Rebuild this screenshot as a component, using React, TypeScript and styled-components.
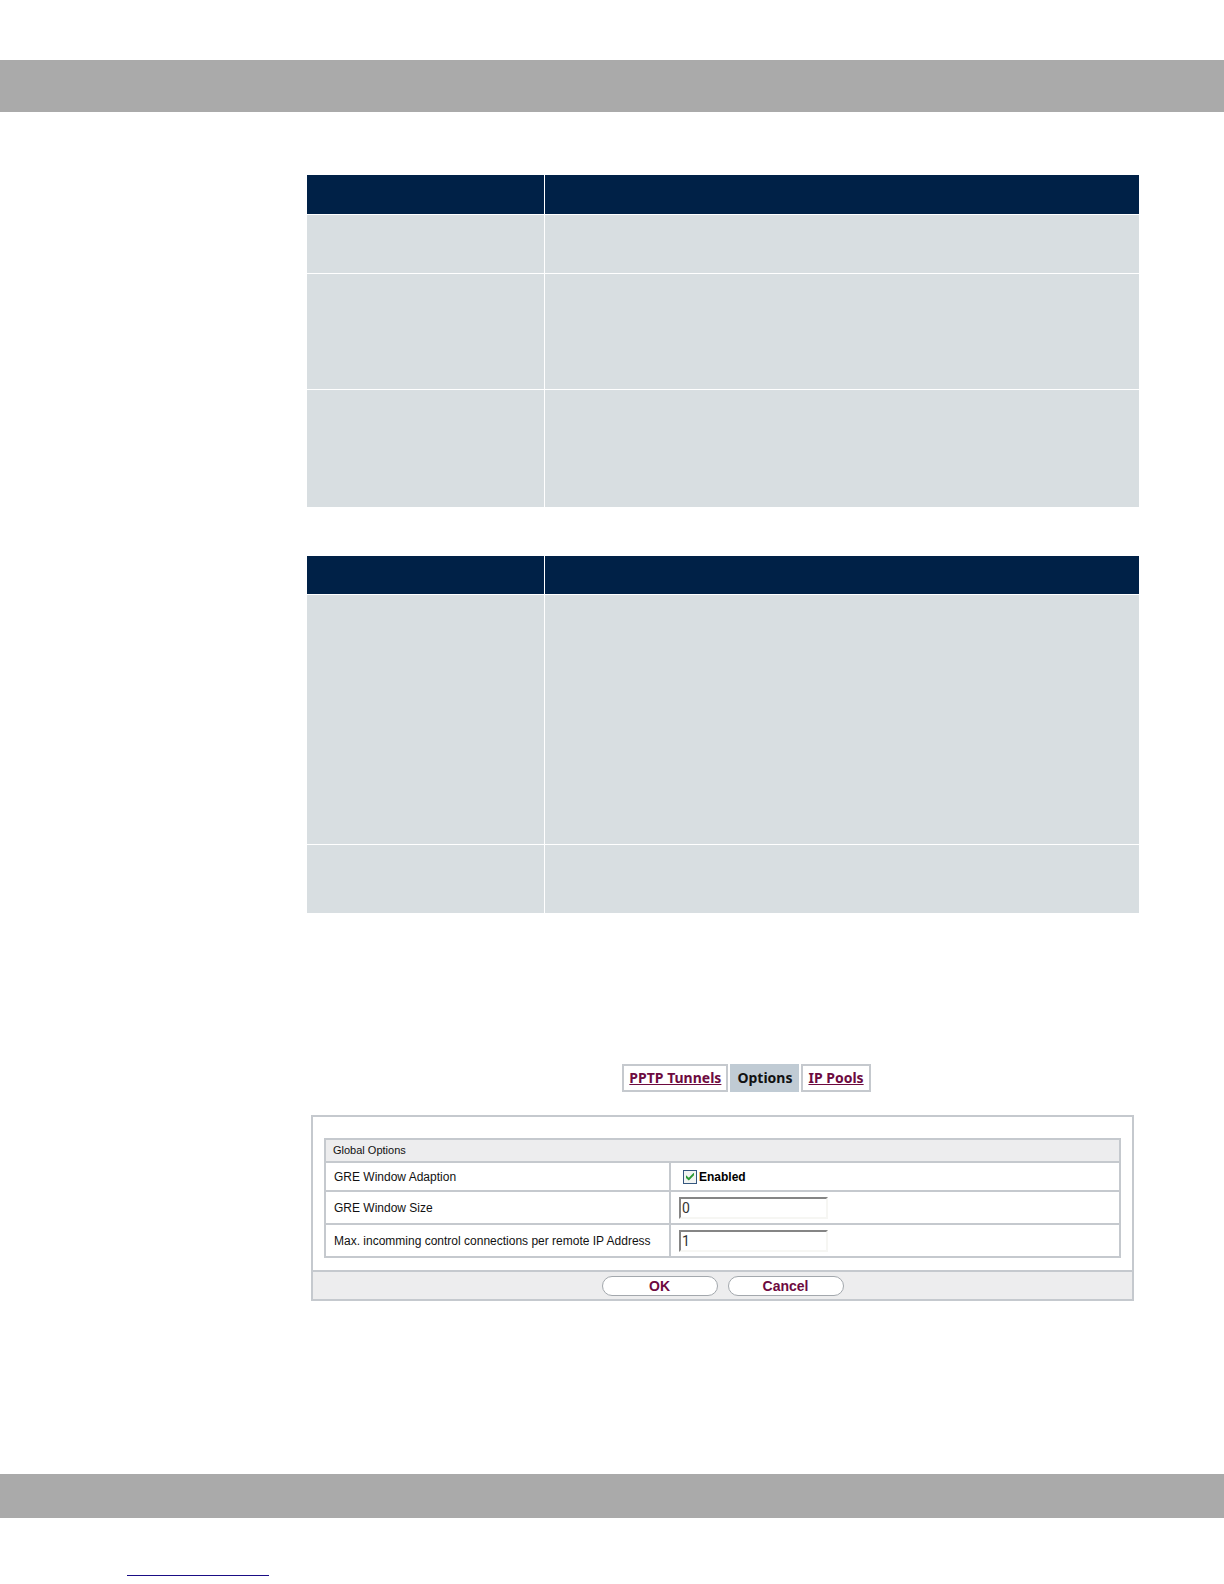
import { useState } from "react";
import styled, { createGlobalStyle } from "styled-components";

const line = "#c5c9ce";
const wine = "#6d0a3f";

const GlobalStyle = createGlobalStyle`
  *, *::before, *::after { box-sizing: border-box; }
  body {
    margin: 0;
    background: #fff;
    color: #111;
    font-family: "Liberation Sans", Arial, sans-serif;
    font-size: 12px;
    line-height: 16px;
  }
`;

const Page = styled.div`
  padding: 60px 0 8px;
`;

const Band = styled.div<{ $height: number }>`
  height: ${(p) => p.$height}px;
  background: #aaa;
`;

const Content = styled.main`
  padding: 63px 85px 173px 307px;
`;

const Grid = styled.table`
  width: 100%;
  margin-bottom: 49px;
  border-spacing: 0;
  table-layout: fixed;
`;

const HeadCell = styled.th`
  padding: 0;
  background: #002147;
  border-bottom: 1px solid #fff;

  &:first-child {
    width: 238px;
    border-right: 1px solid #fff;
  }
`;

const Cell = styled.td`
  padding: 0;
  background: #d8dee1;
  border-bottom: 1px solid #fff;

  &:first-child {
    border-right: 1px solid #fff;
  }

  tr:last-child > & {
    border-bottom: 0;
  }
`;

const Row = styled.tr<{ $height: number }>`
  height: ${(p) => p.$height}px;
`;

const Dialog = styled.section`
  padding: 102px 5px 0 4px;
`;

const Tabs = styled.nav`
  display: flex;
  justify-content: center;
  gap: 2px;
  padding-left: 48px;
  margin-bottom: 23px;
`;

const Tab = styled.a<{ $active?: boolean }>`
  height: 28px;
  padding: 0 5px;
  border: 2px solid ${(p) => (p.$active ? "#c0cbd4" : line)};
  background: ${(p) => (p.$active ? "#c0cbd4" : "#fff")};
  color: ${(p) => (p.$active ? "#111" : wine)};
  font: bold 14px/24px "Noto Sans", "DejaVu Sans", sans-serif;
  text-decoration: ${(p) => (p.$active ? "none" : "underline")};
`;

const Panel = styled.form`
  border: 2px solid ${line};
`;

const PanelBody = styled.div`
  padding: 21px 11px 12px;
`;

const Fields = styled.div`
  border: 2px solid ${line};
`;

const Title = styled.h2`
  margin: 0;
  padding: 0 7px;
  background: #ededee;
  font-size: 11px;
  font-weight: normal;
  line-height: 21px;
`;

const FieldRow = styled.div<{ $height: number }>`
  display: grid;
  grid-template-columns: 345px 1fr;
  height: ${(p) => p.$height}px;
  border-top: 2px solid ${line};
`;

const FieldLabel = styled.label`
  display: flex;
  align-items: center;
  padding-left: 8px;
  border-right: 2px solid ${line};
  white-space: nowrap;
`;

const FieldValue = styled.div`
  display: flex;
  align-items: center;
  padding-left: 8px;
`;

const TextInput = styled.input`
  width: 149px;
  height: 22px;
  padding: 0 1px;
  border: 2px solid;
  border-color: #858585 #f6f6f3 #f6f6f3 #858585;
  background: #fff;
  color: #333;
  font: 14px/18px Roboto, "Liberation Sans", sans-serif;
`;

const CheckLabel = styled.label`
  display: flex;
  align-items: center;
  gap: 2px;
  padding-left: 4px;
  color: #000;
  font-size: 12px;
  font-weight: bold;
`;

const CheckBox = styled.input`
  appearance: none;
  display: grid;
  place-items: center;
  width: 14px;
  height: 14px;
  margin: 0;
  border: 1px solid #35577f;
  background: #f2f4f2;

  &:checked::after {
    content: "";
    width: 8px;
    height: 8px;
    background: #2c9a35;
    clip-path: polygon(0 35%, 35% 65%, 100% 0, 100% 35%, 35% 100%, 0 68%);
  }
`;

const Actions = styled.div`
  display: flex;
  justify-content: center;
  align-items: center;
  gap: 10px;
  height: 29px;
  border-top: 2px solid ${line};
  background: #ededee;
`;

const PillButton = styled.button`
  width: 116px;
  height: 20px;
  padding: 0;
  border: 1px solid #a3a8ad;
  border-radius: 10px;
  background: #fff;
  color: ${wine};
  font: bold 14px/18px "Liberation Sans", Arial, sans-serif;
`;

const FooterRule = styled.hr`
  width: 142px;
  margin: 57px 0 0 127px;
  border: 0;
  border-top: 1px solid #1a0d85;
`;

function BlankTable({ head, rows }: { head: number; rows: number[] }) {
  return (
    <Grid>
      <thead>
        <Row $height={head}>
          <HeadCell />
          <HeadCell />
        </Row>
      </thead>
      <tbody>
        {rows.map((height) => (
          <Row key={height} $height={height}>
            <Cell />
            <Cell />
          </Row>
        ))}
      </tbody>
    </Grid>
  );
}

export default function App() {
  const [adaption, setAdaption] = useState(true);
  const [windowSize, setWindowSize] = useState("0");
  const [connections, setConnections] = useState("1");

  return (
    <>
      <GlobalStyle />
      <Page>
        <Band $height={52} />
        <Content>
          <BlankTable head={40} rows={[59, 116, 117]} />
          <BlankTable head={39} rows={[250, 68]} />
          <Dialog>
            <Tabs>
              <Tab href="#tunnels">PPTP Tunnels</Tab>
              <Tab href="#options" $active>Options</Tab>
              <Tab href="#pools">IP Pools</Tab>
            </Tabs>
            <Panel onSubmit={(e) => e.preventDefault()}>
              <PanelBody>
                <Fields>
                  <Title>Global Options</Title>
                  <FieldRow $height={29}>
                    <FieldLabel htmlFor="adaption">GRE Window Adaption</FieldLabel>
                    <FieldValue>
                      <CheckLabel>
                        <CheckBox
                          id="adaption"
                          type="checkbox"
                          checked={adaption}
                          onChange={(e) => setAdaption(e.target.checked)}
                        />
                        Enabled
                      </CheckLabel>
                    </FieldValue>
                  </FieldRow>
                  <FieldRow $height={33}>
                    <FieldLabel htmlFor="size">GRE Window Size</FieldLabel>
                    <FieldValue>
                      <TextInput id="size" value={windowSize} onChange={(e) => setWindowSize(e.target.value)} />
                    </FieldValue>
                  </FieldRow>
                  <FieldRow $height={33}>
                    <FieldLabel htmlFor="connections">
                      Max. incomming control connections per remote IP Address
                    </FieldLabel>
                    <FieldValue>
                      <TextInput id="connections" value={connections} onChange={(e) => setConnections(e.target.value)} />
                    </FieldValue>
                  </FieldRow>
                </Fields>
              </PanelBody>
              <Actions>
                <PillButton type="submit">OK</PillButton>
                <PillButton type="button">Cancel</PillButton>
              </Actions>
            </Panel>
          </Dialog>
        </Content>
        <Band $height={44} />
        <FooterRule />
      </Page>
    </>
  );
}
